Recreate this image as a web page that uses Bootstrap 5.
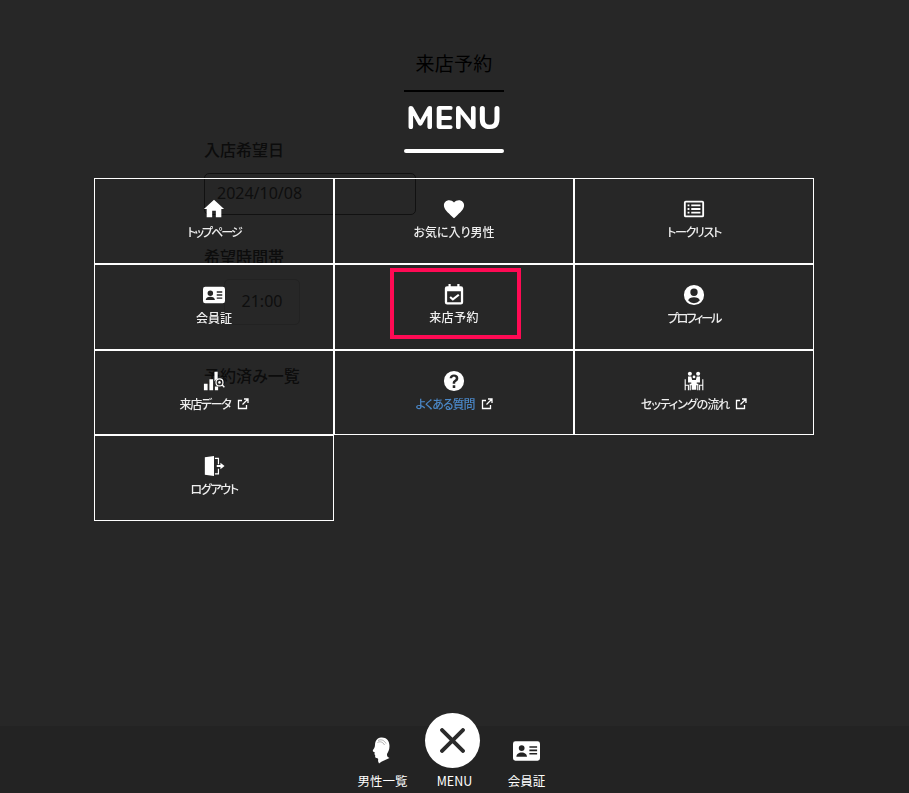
<!DOCTYPE html>
<html lang="ja">
<head>
    <meta charset="UTF-8">
    <title>MENU</title>
    <link href="https://cdn.jsdelivr.net/npm/bootstrap@5.3.3/dist/css/bootstrap.min.css" rel="stylesheet">
    <style>
        html, body { height: 100%; overflow: hidden; }
        body { background: #272727; font-family: "Noto Sans CJK JP", "Noto Sans", sans-serif; color: #000; font-feature-settings: "palt"; }

        /* page lying under the menu, almost invisible */
        .under-title { width: 100px; margin-left: 404px; padding-top: 49px; height: 92px; border-bottom: 2px solid #000; text-align: center; font-size: 19px; line-height: 27px; white-space: nowrap; letter-spacing: .3px; }
        .under-page { width: 212px; margin-left: 204px; padding-top: 45px; color: #0c0c0c; }
        .under-label { font-size: 16px; line-height: 24px; font-weight: 500; white-space: nowrap; }
        .under-date { height: 42px; margin-top: 12px; margin-bottom: 29px; padding: 5px 12px; border: 1px solid #111; border-radius: 5px; font-size: 16px; line-height: 28px; font-family: "Noto Sans", sans-serif; color: #0e0e0e; }
        .under-time { width: 76px; height: 46px; margin: 11px 0 38px 20px; border: 1px solid #222; border-radius: 5px; text-align: center; font-size: 16px; line-height: 42px; font-family: "Noto Sans", sans-serif; color: #0e0e0e; }

        /* menu overlay */
        .menu-layer { position: fixed; inset: 0; padding-top: 95px; }
        .menu-heading { width: 100px; margin-left: 404px; height: 58px; position: relative; color: #fff; text-align: center; font-family: "Nunito", "Lato", sans-serif; font-size: 32px; font-weight: 800; line-height: 48px; }
        .menu-heading::after { content: ""; position: absolute; left: 0; right: 0; bottom: 0; height: 4px; border-radius: 2px; background: #fff; }
        .menu-grid { width: 720px; margin: 25px 0 0 94px; display: grid; grid-template-columns: repeat(3, 240px); grid-auto-rows: 85.75px; }
        .menu-cell { border: 1px solid #fff; color: #eee; text-decoration: none; font-size: 12px; font-weight: 500; line-height: 17px; padding-top: 19px; }
        .menu-cell svg.cell-icon { display: block; width: 22px; height: 22px; margin-bottom: 3px; fill: #fff; }
        .menu-cell.faq-cell { color: #4a86c5; }
        .kana-snug { letter-spacing: -1px; }
        .kana-tight { letter-spacing: -1.3px; }
        .kana-tighter { letter-spacing: -2px; }
        .ext-icon { width: 12px; height: 12px; margin-left: 6px; vertical-align: -1px; fill: none; stroke: #fff; stroke-width: 1.3; }
        .cell-active { width: 131px; height: 71px; border: 4px solid #ff0a54; margin-top: -26px; margin-left: 3px; padding: 11px 3px 0 0; letter-spacing: .4px; }

        /* bottom nav */
        .bottom-bar { position: fixed; left: 0; right: 0; bottom: 0; height: 67px; background: #232323; color: #fff; font-size: 12.5px; }
        .bottom-item { width: 72px; height: 67px; position: relative; text-align: center; padding-top: 46px; line-height: 17px; }
        .bottom-item svg { position: absolute; fill: #fff; }
        .head-icon { width: 18px; height: 27px; left: 25px; top: 11px; }
        .card-icon { width: 27px; height: 22px; left: 22px; top: 14px; }
        .close-circle { position: absolute; left: 6px; top: -13px; width: 55px; height: 55px; border-radius: 50%; background: #fff; display: flex; align-items: center; justify-content: center; }
        .close-circle svg { position: static; width: 25px; height: 25px; fill: none; stroke: #2b2b2b; stroke-width: 3.8; stroke-linecap: round; }
    </style>
</head>
<body>
    <div class="under-title">来店予約</div>
    <div class="under-page">
        <div class="under-label">入店希望日</div>
        <div class="under-date">2024/10/08</div>
        <div class="under-label">希望時間帯</div>
        <div class="under-time">21:00</div>
        <div class="under-label">予約済み一覧</div>
    </div>

    <div class="menu-layer">
        <div class="menu-heading">MENU</div>
        <div class="menu-grid">
            <a class="menu-cell d-flex flex-column align-items-center" href="#">
                <svg class="cell-icon" viewBox="0 0 24 24"><path d="M10 21v-7h4v7h6v-9h3L12 2 1 12h3v9z"/></svg>
                <span class="kana-tighter">トップページ</span>
            </a>
            <a class="menu-cell d-flex flex-column align-items-center" href="#">
                <svg class="cell-icon" viewBox="0 0 24 24"><path d="M12 22l-1.600-1.400C4.800 15.600 1 12.200 1 8 1 4.800 3.500 2.400 6.700 2.400c1.900 0 3.900.9 5.300 2.600 1.400-1.700 3.400-2.600 5.300-2.600C20.500 2.400 23 4.800 23 8c0 4.200-3.800 7.600-9.400 12.600z"/></svg>
                お気に入り男性
            </a>
            <a class="menu-cell d-flex flex-column align-items-center" href="#">
                <svg class="cell-icon" viewBox="0 0 24 24"><path fill-rule="evenodd" d="M3 3h18a2 2 0 0 1 2 2v14a2 2 0 0 1-2 2H3a2 2 0 0 1-2-2V5a2 2 0 0 1 2-2zm0 2v14h18V5zM5 7h2v2H5zm4 0h10v2H9zm-4 4h2v2H5zm4 0h10v2H9zm-4 4h2v2H5zm4 0h10v2H9z"/></svg>
                <span class="kana-tight">トークリスト</span>
            </a>
            <a class="menu-cell d-flex flex-column align-items-center" href="#">
                <svg class="cell-icon" viewBox="0 0 24 24"><path fill-rule="evenodd" d="M2.500 3h19A2.500 2.500 0 0 1 24 5.500v13a2.500 2.500 0 0 1-2.500 2.500h-19A2.500 2.500 0 0 1 0 18.500v-13A2.500 2.500 0 0 1 2.500 3zM8 7a3 3 0 1 0 0 6 3 3 0 0 0 0-6zM3 17.500h10c0-2.400-2.200-3.700-5-3.700s-5 1.300-5 3.700zM15 8v1.600h6V8zm0 3.300v1.600h6v-1.600zm0 3.300v1.600h6v-1.600z"/></svg>
                会員証
            </a>
            <a class="menu-cell d-flex align-items-center justify-content-center" href="#">
                <span class="cell-active d-flex flex-column align-items-center">
                    <svg class="cell-icon" viewBox="0 0 24 24"><path fill-rule="evenodd" d="M6 1h2.400v2.500h7.200V1H18v2.500h1.500A2.500 2.500 0 0 1 22 6v15a2.500 2.500 0 0 1-2.500 2.500h-15A2.500 2.500 0 0 1 2 21V6a2.500 2.500 0 0 1 2.500-2.500H6zM4.500 9V21h15V9zm12 3l1.500 1.500-7.300 5.800-3.700-3.300 1.500-1.600 2.300 2z"/></svg>
                    来店予約
                </span>
            </a>
            <a class="menu-cell d-flex flex-column align-items-center" href="#">
                <svg class="cell-icon" viewBox="0 0 24 24"><path fill-rule="evenodd" d="M12 1a11 11 0 1 1 0 22 11 11 0 0 1 0-22zm0 4a4 4 0 1 0 0 8 4 4 0 0 0 0-8zm0 9.500c-3 0-6 1.300-6.300 3.500a8.300 8.300 0 0 0 12.600 0c-.3-2.200-3.300-3.500-6.300-3.500z"/></svg>
                <span class="kana-tighter">プロフィール</span>
            </a>
            <a class="menu-cell d-flex flex-column align-items-center" href="#">
                <svg class="cell-icon" viewBox="0 0 24 24"><path d="M1 15h4v7H1zm6-5h4v12H7zm5.500-8H16v7.500a6 6 0 0 0-3.500 3zM13 18h3.500v4H13z"/><circle cx="18" cy="13.500" r="3.800" fill="none" stroke="#fff" stroke-width="1.300"/><circle cx="18" cy="13.500" r="1.400"/><path d="M20.700 16.200l2.600 2.600" stroke="#fff" stroke-width="1.500"/></svg>
                <span><span class="kana-tight">来店データ</span><svg class="ext-icon" viewBox="0 0 12 12"><path d="M9.500 7v3.500h-8v-8H5M7 1h4v4M11 1L5.500 6.500"/></svg></span>
            </a>
            <a class="menu-cell faq-cell d-flex flex-column align-items-center" href="#">
                <svg class="cell-icon" viewBox="0 0 24 24"><path fill-rule="evenodd" d="M12 1a11 11 0 1 1 0 22 11 11 0 0 1 0-22zm-1.400 15.500v3h2.800v-3zM12 5c-2.800 0-4.600 1.600-4.800 4h2.700c.1-1 .9-1.600 2-1.600s2 .6 2 1.600c0 .8-.5 1.300-1.400 1.900-1.400.9-1.900 1.800-1.900 3.600v.4h2.700v-.3c0-1 .3-1.500 1.300-2.100 1.300-.9 2.100-1.900 2.100-3.600C16.700 6.400 14.800 5 12 5z"/></svg>
                <span><span class="kana-snug">よくある質問</span><svg class="ext-icon" viewBox="0 0 12 12"><path d="M9.500 7v3.500h-8v-8H5M7 1h4v4M11 1L5.500 6.500"/></svg></span>
            </a>
            <a class="menu-cell d-flex flex-column align-items-center" href="#">
                <svg class="cell-icon" viewBox="0 0 24 24"><circle cx="7.500" cy="4" r="2.200"/><circle cx="16.500" cy="4" r="2.200"/><circle cx="12" cy="7.500" r="1.500"/><path d="M5.500 7H9l1 4h4l1-4h3.500v6.500h-3.500v1.500h1.800v7h-1.300v-5.500h-7V22H7.200v-7H9v-1.500H5.500zM10.500 12h3v2.500h1v7h-5v-7h1zM1.800 10H3v6h3.500v6H5.300v-4.800H3V22H1.800zm19.200 0h1.200v12H21v-4.800h-2.300V22h-1.200v-6H21z"/></svg>
                <span><span class="kana-snug">セッティングの流れ</span><svg class="ext-icon" viewBox="0 0 12 12"><path d="M9.500 7v3.500h-8v-8H5M7 1h4v4M11 1L5.500 6.500"/></svg></span>
            </a>
            <a class="menu-cell d-flex flex-column align-items-center" href="#">
                <svg class="cell-icon" viewBox="0 0 24 24"><path d="M2 2.500l10-1.500v22l-10-1.500zM13 3h4.500v7h-1.300V4.300H13zM13 20h3.200v-5h1.300v6.300H13zM15 11h4V8.500l4.500 3.500-4.500 3.500V13h-4z"/></svg>
                <span class="kana-tight">ログアウト</span>
            </a>
        </div>
    </div>

    <div class="bottom-bar d-flex justify-content-center">
        <div class="bottom-item">
            <svg class="head-icon" viewBox="0 0 18 27"><path d="M9 .5C14 0 17.500 3.500 17.500 9c0 4-1.500 6-2.500 8-.2 2 .5 3 2.500 4C14 22.500 10 24 7 26.500L6 24c.5-2 0-3-1.500-3C3 21 3 19.500 3.200 18c-1.200-.5-.7-1.500-.4-2.500C2 15 .5 14.500.8 13.500 1.500 12 3 10.500 3 8 3 4 5 1 9 .5z"/><path d="M6 3.500C9 2 12 3 14 6.500M5.500 5.500C8 4 11 5 12.500 8" fill="none" stroke="#999" stroke-width=".8"/></svg>
            男性一覧
        </div>
        <div class="bottom-item">
            <div class="close-circle"><svg viewBox="0 0 24 24"><path d="M2 2l20 20M22 2L2 22"/></svg></div>
            MENU
        </div>
        <div class="bottom-item">
            <svg class="card-icon" viewBox="0 0 28 22"><path fill-rule="evenodd" d="M2.500 1h23A2.500 2.500 0 0 1 28 3.500v15a2.500 2.500 0 0 1-2.500 2.500h-23A2.500 2.500 0 0 1 0 18.500v-15A2.500 2.500 0 0 1 2.500 1zM9 5a3 3 0 1 0 0 6 3 3 0 0 0 0-6zM3.500 17h11c0-2.800-2.400-4.500-5.500-4.500S3.500 14.200 3.500 17zM17 6v1.700h8V6zm0 3.500v1.700h8V9.500zm0 3.500v1.700h8V13z"/></svg>
            会員証
        </div>
    </div>
    <script src="https://cdn.jsdelivr.net/npm/bootstrap@5.3.3/dist/js/bootstrap.bundle.min.js"></script>
</body>
</html>
